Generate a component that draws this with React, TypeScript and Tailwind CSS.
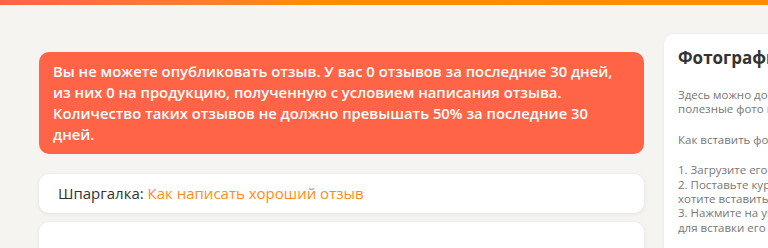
import React from "react";

const font = { fontFamily: '"Open Sans", "Noto Sans", sans-serif' };

export default function App() {
  return (
    <div className="w-[768px] h-[248px] overflow-hidden bg-[#f5f4f0] font-['Open_Sans',sans-serif]" style={font}>
      <div className="h-[5px] bg-gradient-to-r from-[#ff6347] via-[#ff8a05] via-40% to-[#ff8c00]" />
      <div className="flex gap-[20px] pl-[39px] pt-[29px]">
        {/* основная колонка */}
        <div className="w-[605px] shrink-0 flex flex-col pt-[18px]">
          <div className="bg-[#ff6446] rounded-[10px] pl-[14px] pr-[10px] pt-[9px] pb-[9px] text-white font-semibold text-[14.8px] leading-[21px]">
            Вы не можете опубликовать отзыв. У вас 0 отзывов за последние 30 дней,
            <br />
            из них 0 на продукцию, полученную с условием написания отзыва.
            <br />
            Количество таких отзывов не должно превышать 50% за последние 30
            <br />
            дней.
          </div>
          <div className="mt-[20px] h-[39px] bg-white rounded-[10px] shadow-[0_1px_4px_rgba(0,0,0,0.08)] flex items-center pl-[19px] text-[15px]">
            <span className="text-[#333333]">Шпаргалка:&nbsp;</span>
            <a href="#" className="text-[#ff8c1a]">
              Как написать хороший отзыв
            </a>
          </div>
          <div className="mt-[9px] h-[60px] bg-white rounded-[10px] shadow-[0_1px_4px_rgba(0,0,0,0.08)]" />
        </div>

        {/* боковая панель */}
        <div className="w-[290px] shrink-0 h-[240px] bg-white rounded-[10px] shadow-[0_1px_4px_rgba(0,0,0,0.06)] pl-[14px] pt-[12px] whitespace-nowrap">
          <h3 className="text-[17px] font-bold text-[#333333] leading-[24px]">Фотографии</h3>
          <div className="mt-[18px] text-[11.5px] leading-[14.4px] text-[#777777]">
            <p>
              Здесь можно добавить фотографии товара и
              <br />
              полезные фото процесса использования.
            </p>
            <p className="mt-[16px]">Как вставить фото в текст отзыва:</p>
            <p className="mt-[16px]">
              1. Загрузите его в форму ниже
              <br />
              2. Поставьте курсор в то место, где вы
              <br />
              хотите вставить фото
              <br />
              3. Нажмите на уменьшенную копию фото
              <br />
              для вставки его в текст
            </p>
          </div>
        </div>
      </div>
    </div>
  );
}
